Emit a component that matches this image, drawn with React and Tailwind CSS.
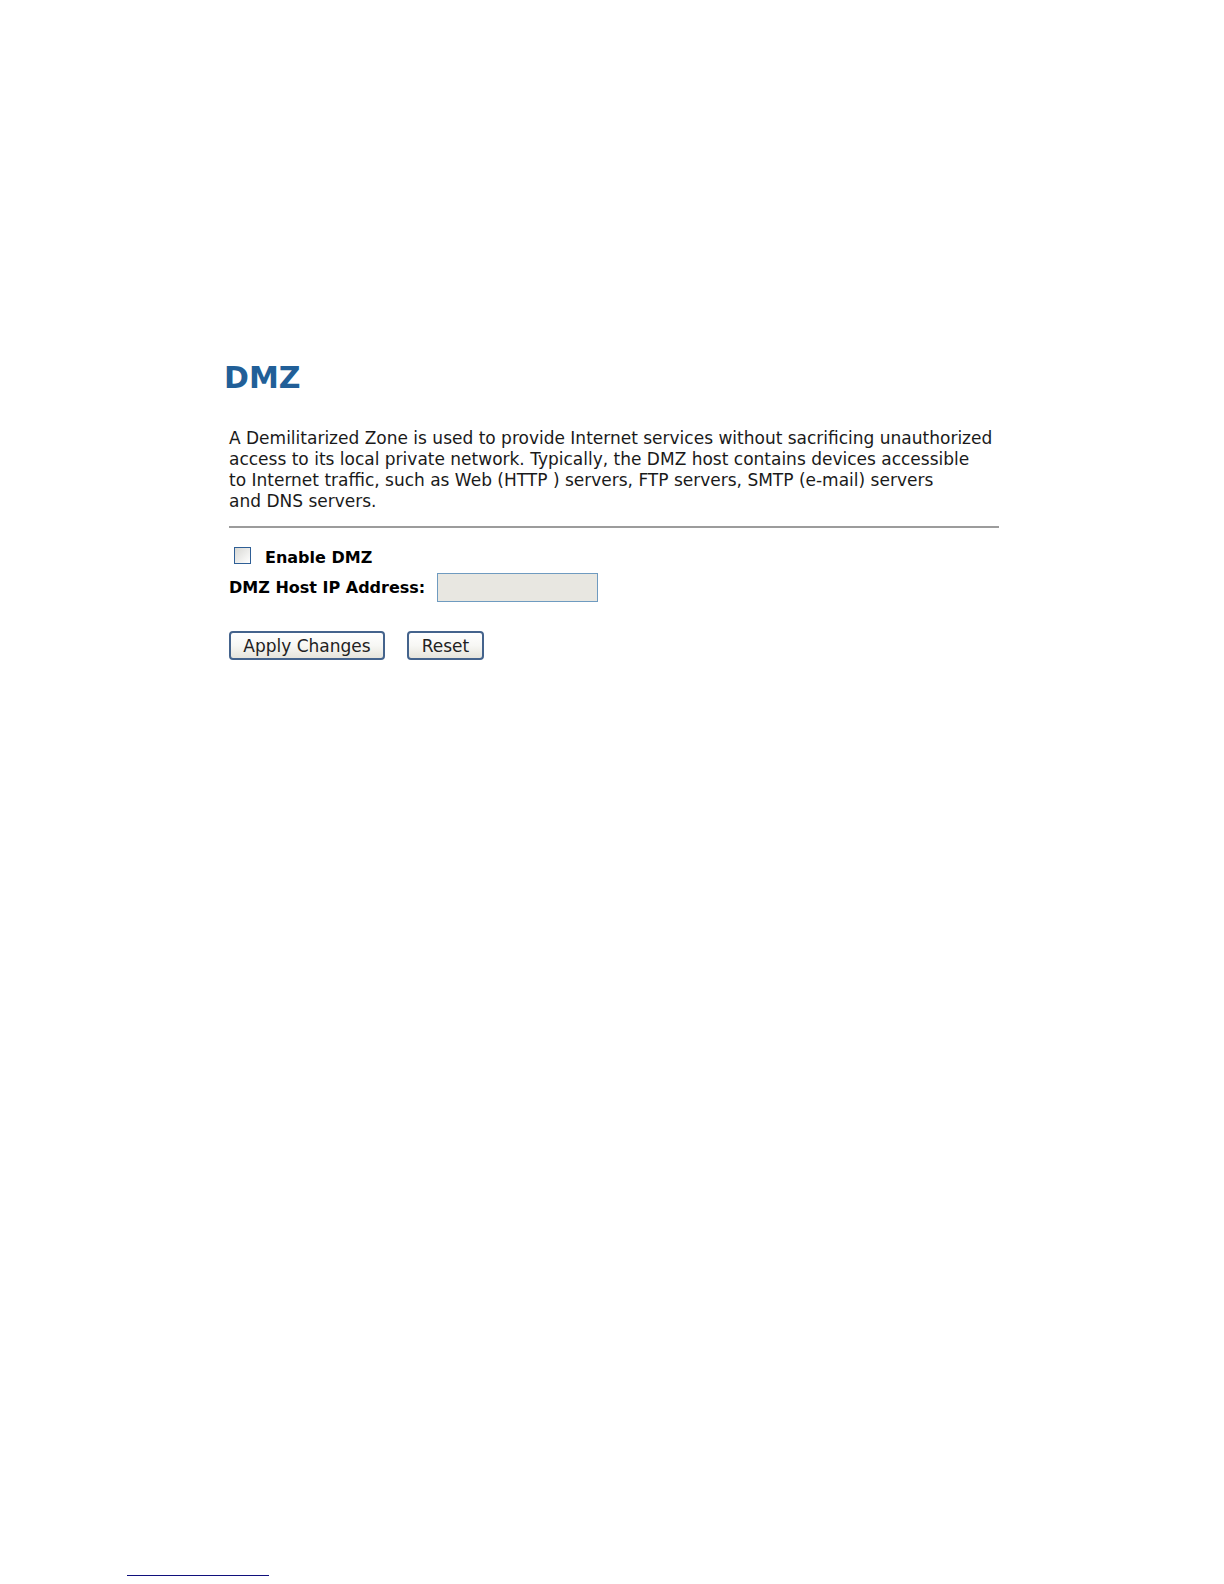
import { useState } from 'react'

const BUTTON_CLASS =
    'h-[29px] rounded-[4px] border-2 border-[#44638c] bg-linear-to-b from-white via-[#f7f7f4] to-[#e6e4dc] text-[17px] leading-5 text-[#222222]'

export default function App() {
    const [enabled, setEnabled] = useState(false)
    const [hostIp, setHostIp] = useState('')

    const handleReset = () => {
        setEnabled(false)
        setHostIp('')
    }

    return (
        <div className="min-h-screen flex flex-col bg-white text-black font-['DejaVu_Sans',Verdana,sans-serif]">
            <main className="px-56 pt-[358px]">
                <h1 className="text-[30px] leading-10 font-bold text-[#215f98]">DMZ</h1>

                <div className="pl-[5px] pr-px pt-[30px]">
                    <p className="text-[17px] leading-[21px] text-[#1a1a1a] whitespace-nowrap">
                        A Demilitarized Zone is used to provide Internet services without sacrificing unauthorized
                        <br />
                        access to its local private network. Typically, the DMZ host contains devices accessible
                        <br />
                        to Internet traffic, such as Web (HTTP ) servers, FTP servers, SMTP (e-mail) servers
                        <br />
                        and DNS servers.
                    </p>

                    <hr className="mt-[14px] border-0 h-[2px] bg-[#9c9c9c]" />

                    <form onSubmit={(e) => e.preventDefault()} className="pt-[18px]">
                        <div className="flex items-start pl-[5px] h-[27px]">
                            <input
                                id="enable-dmz"
                                type="checkbox"
                                checked={enabled}
                                onChange={(e) => setEnabled(e.target.checked)}
                                className="appearance-none size-[17px] mt-px border border-[#2f5f96] bg-linear-to-br from-[#d8d8d4] to-white checked:bg-[#215f98]"
                            />
                            <label htmlFor="enable-dmz" className="pl-3.5 pt-[2px] text-base leading-5 font-bold">
                                Enable DMZ
                            </label>
                        </div>

                        <div className="flex items-center gap-3">
                            <label htmlFor="host-ip" className="text-base leading-5 font-bold">
                                DMZ Host IP Address:
                            </label>
                            <input
                                id="host-ip"
                                type="text"
                                value={hostIp}
                                disabled={!enabled}
                                onChange={(e) => setHostIp(e.target.value)}
                                className="w-[161px] h-[29px] px-1 border border-[#6f9bc0] bg-white disabled:bg-[#e8e7e1]"
                            />
                        </div>

                        <div className="flex pt-[29px] gap-[22px]">
                            <button type="submit" className={`${BUTTON_CLASS} w-[156px]`}>
                                Apply Changes
                            </button>
                            <button type="button" onClick={handleReset} className={`${BUTTON_CLASS} w-[77px]`}>
                                Reset
                            </button>
                        </div>
                    </form>
                </div>
            </main>

            {/* Footnote rule */}
            <footer className="mt-auto pl-[127px] pb-2">
                <div className="w-[142px] h-px bg-[#10107c]" />
            </footer>
        </div>
    )
}
